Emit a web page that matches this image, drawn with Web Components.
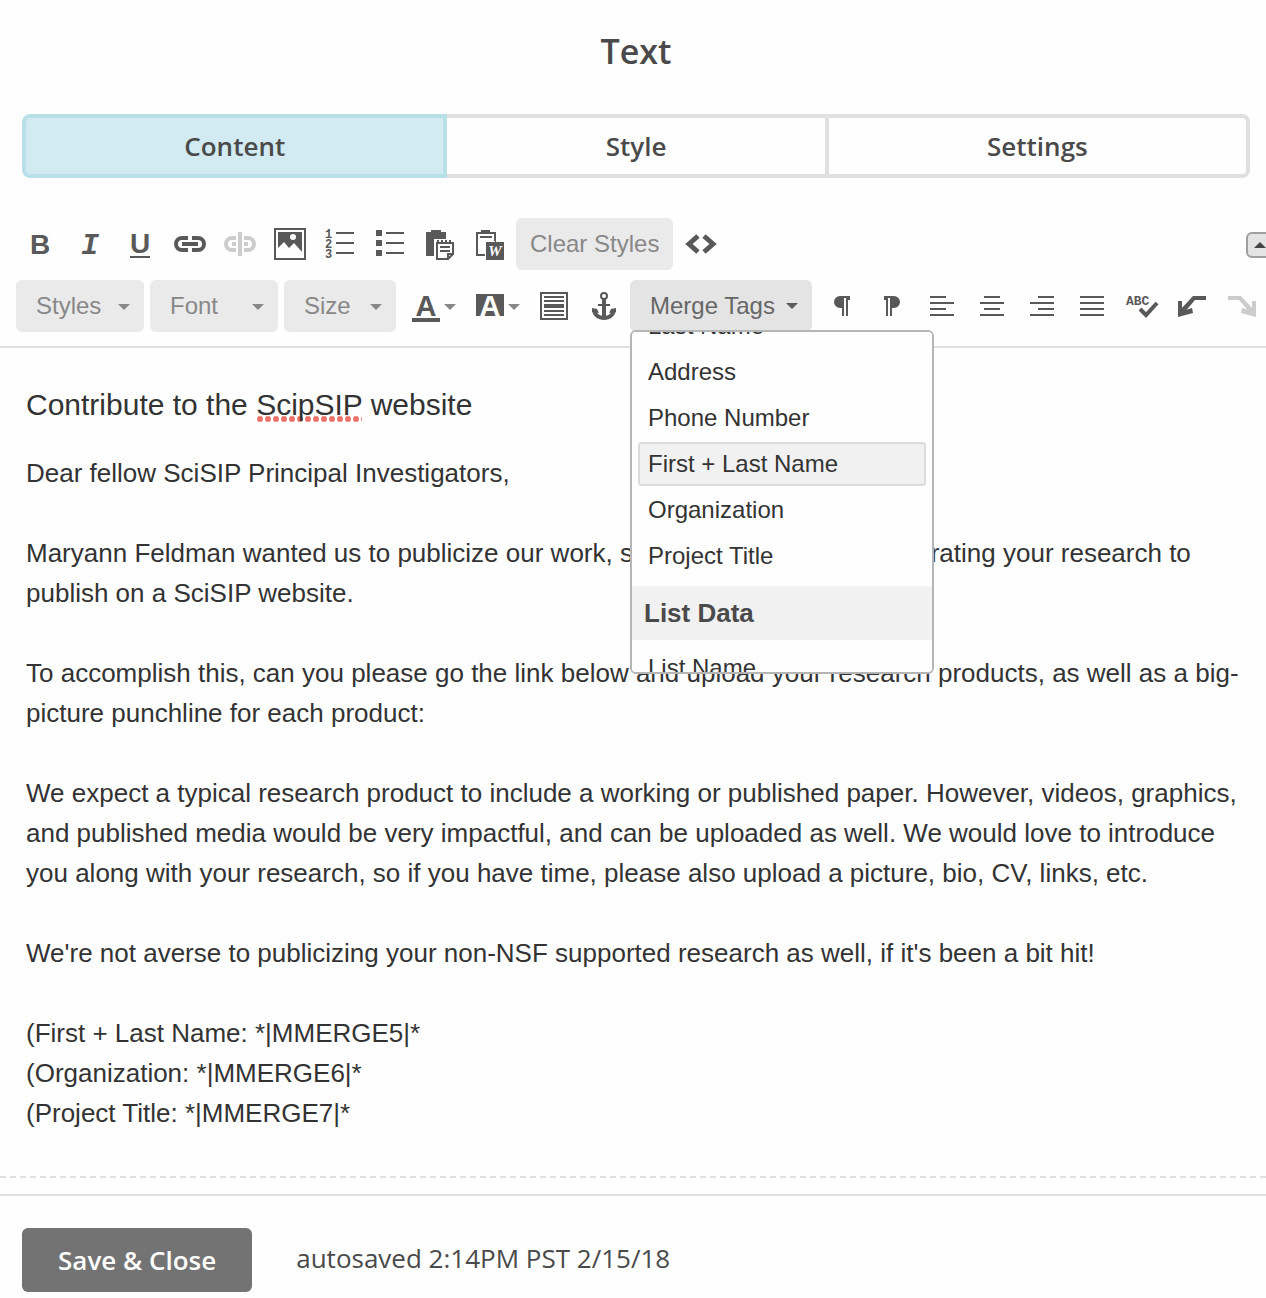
<!DOCTYPE html>
<html lang="en">
<head>
<meta charset="utf-8">
<meta name="viewport" content="width=device-width, initial-scale=1">
<title>Text block editor</title>
<style>
  html { background: #fefefe; }
  body {
    margin: 0;
    overflow-x: hidden;
    --ink: #595959;
    --muted: #888888;
    --line: #e0e0e0;
    --chip: #eaeaea;
    --heading: #4a4a4a;
    --ui: "Liberation Sans", Arial, sans-serif;
    --brand: "Open Sans", "Noto Sans", sans-serif;
    font-family: var(--ui);
    color: #333333;
  }
</style>
</head>
<body>
<content-editor></content-editor>

<script>
const ICONS = {
  bold: '<text x="16" y="26" text-anchor="middle" font-size="28" font-weight="700">B</text>',
  italic: '<text x="16" y="26" text-anchor="middle" font-size="30" font-weight="700" font-style="italic" font-family="Liberation Mono, monospace">I</text>',
  underline: '<text x="16" y="25" text-anchor="middle" font-size="28" font-weight="700">U</text><path d="M6 28h20v2H6z"/>',
  link: '<path class="s4" d="M14 10H8a6 6 0 0 0 0 12h6M18 10h6a6 6 0 0 1 0 12h-6M8 16h16"/>',
  unlink: '<path class="s4" d="M12 10H8a6 6 0 0 0 0 12h4M20 10h4a6 6 0 0 1 0 12h-4M8 16h4M20 16h4M16 4v24"/>',
  image: '<path class="s2" d="M1 1h30v30H1z"/><path d="M4 4h24v20l-8-9-5 5-5-6-6 6z"/><circle cx="19" cy="9" r="3" fill="#fefefe"/>',
  ordered: '<g font-size="12" font-weight="700" font-family="Liberation Mono, monospace"><text x="1" y="10">1</text><text x="1" y="20">2</text><text x="1" y="30">3</text></g><path class="s2" d="M12 5h18M12 15h18M12 25h18"/>',
  bullets: '<path d="M2 2h6v6H2zM2 12h6v6H2zM2 22h6v6H2z"/><path class="s2" d="M12 5h18M12 15h18M12 25h18"/>',
  paste: '<path d="M2 4h5V2h10v2h5v24H2z"/><path fill="#fefefe" d="M10 11h22v21H10z"/><path class="s2" d="M13 15h16v11l-5 5H13zM24 31v-5h5M14 12v3M18 12v3M22 12v3M26 12v3M16 19h10M16 23h10"/>',
  word: '<path class="s2" d="M3 5h18v22H3zM6 9h12"/><path d="M7 2h9v4H7z"/><path fill="#fefefe" d="M11 13h10v15H11z"/><path d="M12 14h18v18H12z"/><text x="21" y="28" text-anchor="middle" fill="#fefefe" font-size="15" font-weight="700" font-style="italic" font-family="Liberation Serif, serif">W</text>',
  code: '<path class="s5" d="M13 8 4 16l9 8M19 8l9 8-9 8"/>',
  block: '<path class="s2" d="M3 3h26v26H3zM6 7h20M6 11h20M6 21h20M6 25h20"/><path d="M6 14h20v4H6z"/>',
  anchor: '<circle class="s2" cx="16" cy="6" r="3"/><path d="M14 9h4v17h-4zM10 14h12v2H10zM4 18l5 1 2 4-7-1zM28 18l-5 1-2 4 7-1z"/><path class="s4" d="M6 19c0 5 4 9 10 9s10-4 10-9"/>',
  ltr: '<path d="M24 6H14a6 6 0 0 0 0 12h2v8h2V8h2v18h2V10h2z"/>',
  rtl: '<path d="M8 6h10a6 6 0 0 1 0 12h-2v8h-2V8h-2v18h-2V10H8z"/>',
  left: '<path class="s2" d="M4 7h16M4 13h24M4 19h16M4 25h24"/>',
  center: '<path class="s2" d="M8 7h16M4 13h24M8 19h16M4 25h24"/>',
  right: '<path class="s2" d="M12 7h16M4 13h24M12 19h16M4 25h24"/>',
  justify: '<path class="s2" d="M4 7h24M4 13h24M4 19h24M4 25h24"/>',
  spell: '<text x="0" y="15" font-size="13" font-weight="700" font-family="Liberation Mono, monospace">ABC</text><path class="s4" d="m14 19 6 6 11-12"/>',
  undo: '<path d="M30 6v4H19L8 23l-4-3L17 6z"/><path d="M2 11h4v10l10-3 1 5-15 4z"/>',
  redo: '<path d="M2 6v4h11l11 13 4-3L15 6z"/><path d="M30 11h-4v10l-10-3-1 5 15 4z"/>',
  color: '<text x="14" y="26" text-anchor="middle" font-size="29" font-weight="700">A</text><path d="M0 28h28v4H0z"/><path class="caret" d="M32 14h12l-6 6z"/>',
  backdrop: '<path d="M0 4h28v22H0z"/><text x="14" y="26" text-anchor="middle" fill="#fefefe" font-size="29" font-weight="700">A</text><path class="caret" d="M32 14h12l-6 6z"/>'
};

class BaseElement extends HTMLElement {
  render(html) {
    if (!this.shadowRoot) this.attachShadow({ mode: 'open' });
    this.shadowRoot.innerHTML = html;
  }
}

/* Icon-only toolbar button; "wide" adds room for a caret. */
customElements.define('tool-icon', class extends BaseElement {
  connectedCallback() {
    const wide = this.hasAttribute('wide');
    const w = wide ? 44 : 32;
    this.render(`
      <style>
        :host { display: block; flex: none; margin-right: 2px; }
        button {
          display: flex; align-items: center; justify-content: center;
          box-sizing: border-box; width: 48px; height: 52px; padding: 0;
          border: 0; background: none; color: var(--ink); font-family: var(--ui);
        }
        :host([wide]) button { width: 62px; padding-left: 2px; }
        button:disabled { color: #cccccc; }
        svg { display: block; fill: currentColor; overflow: visible; }
        .s2, .s4, .s5 { fill: none; stroke: currentColor; stroke-width: 2; }
        .s4 { stroke-width: 4; }
        .s5 { stroke-width: 5; }
        .caret { fill: var(--muted); }
      </style>
      <button type="button" aria-label="${this.getAttribute('label')}" ${this.hasAttribute('disabled') ? 'disabled' : ''}>
        <svg width="${w}" height="32" viewBox="0 0 ${w} 32" aria-hidden="true">${ICONS[this.getAttribute('name')]}</svg>
      </button>`);
  }
});

customElements.define('tool-button', class extends BaseElement {
  connectedCallback() {
    this.render(`
      <style>
        :host { display: block; flex: none; margin-right: 4px; }
        button {
          display: block; height: 52px; padding: 0 14px; border: 0; border-radius: 6px;
          background: var(--chip); color: var(--muted);
          font: 24px/52px var(--ui); white-space: nowrap;
        }
      </style>
      <button type="button"><slot></slot></button>`);
  }
});

customElements.define('tool-select', class extends BaseElement {
  connectedCallback() {
    const label = this.getAttribute('label');
    this.render(`
      <style>
        :host { display: block; flex: none; position: relative; margin-right: 6px; width: 128px; }
        :host([compact]) { width: 112px; }
        select {
          appearance: none; display: block; box-sizing: border-box; width: 100%; height: 52px;
          margin: 0; padding: 0 32px 0 20px; border: 0; border-radius: 6px;
          background: var(--chip); color: var(--muted); font: 24px/52px var(--ui);
        }
        svg { position: absolute; right: 14px; top: 24px; fill: var(--muted); pointer-events: none; }
      </style>
      <select aria-label="${label}"><option>${label}</option></select>
      <svg width="12" height="6" aria-hidden="true"><path d="M0 0h12L6 6z"/></svg>`);
  }
});

/* Scrollable list of merge tags. */
customElements.define('tag-menu', class extends BaseElement {
  connectedCallback() {
    this.render(`
      <style>
        :host {
          display: block; box-sizing: border-box; width: 304px; height: 344px;
          border: 2px solid #b5b5b5; border-radius: 6px; background: #fefefe;
          overflow-y: auto; scrollbar-width: none;
        }
        ul { list-style: none; margin: 0; padding: 6px; display: flex; flex-direction: column; gap: 2px; }
        button {
          display: block; box-sizing: border-box; width: 100%; height: 44px; padding: 0 8px;
          border: 2px solid transparent; border-radius: 4px; background: none;
          color: #333333; font: 24px/40px var(--ui); text-align: left;
        }
        button[aria-current] { background: #f1f1f1; border-color: #dcdcdc; }
        h2 {
          margin: 2px 0 0; height: 54px; padding: 0 12px; background: #f1f1f1;
          color: var(--heading); font: bold 26px/54px var(--ui);
        }
      </style>
      <ul>
        <li><button type="button">Last Name</button></li>
        <li><button type="button">Address</button></li>
        <li><button type="button">Phone Number</button></li>
        <li><button type="button" aria-current="true">First + Last Name</button></li>
        <li><button type="button">Organization</button></li>
        <li><button type="button">Project Title</button></li>
      </ul>
      <h2>List Data</h2>
      <ul><li><button type="button">List Name</button></li></ul>`);
    this.scrollTop = 34;
  }
});

customElements.define('merge-dropdown', class extends BaseElement {
  connectedCallback() {
    this.render(`
      <style>
        :host { display: block; flex: none; position: relative; margin-right: 6px; }
        .trigger {
          display: flex; align-items: center; justify-content: space-between; box-sizing: border-box;
          width: 182px; height: 52px; padding: 0 14px 0 20px; border: 0; border-radius: 6px;
          background: #e4e4e4; color: #666666; font: 24px/52px var(--ui); white-space: nowrap;
        }
        svg { fill: var(--ink); }
        tag-menu { position: absolute; left: 0; top: 50px; z-index: 2; }
      </style>
      <button class="trigger" type="button" aria-haspopup="true" aria-expanded="true">
        <span>Merge Tags</span>
        <svg width="12" height="6" aria-hidden="true"><path d="M0 0h12L6 6z"/></svg>
      </button>
      <tag-menu></tag-menu>`);
  }
});

customElements.define('editor-toolbar', class extends BaseElement {
  connectedCallback() {
    this.render(`
      <style>
        :host {
          display: flex; flex-direction: column; gap: 10px; padding: 0 0 14px 16px;
          border-bottom: 2px solid var(--line);
        }
        .row { display: flex; align-items: center; }
        .collapse {
          flex: none; display: flex; align-items: center; justify-content: center;
          box-sizing: border-box; width: 28px; height: 26px; padding: 0; margin: 2px -8px 0 auto;
          border: 2px solid #a0a0a0; border-radius: 6px; background: #e4e4e4;
        }
      </style>
      <div class="row">
        <tool-icon name="bold" label="Bold"></tool-icon>
        <tool-icon name="italic" label="Italic"></tool-icon>
        <tool-icon name="underline" label="Underline"></tool-icon>
        <tool-icon name="link" label="Link"></tool-icon>
        <tool-icon name="unlink" label="Unlink" disabled></tool-icon>
        <tool-icon name="image" label="Image"></tool-icon>
        <tool-icon name="ordered" label="Numbered list"></tool-icon>
        <tool-icon name="bullets" label="Bulleted list"></tool-icon>
        <tool-icon name="paste" label="Paste as plain text"></tool-icon>
        <tool-icon name="word" label="Paste from Word"></tool-icon>
        <tool-button>Clear Styles</tool-button>
        <tool-icon name="code" label="Source"></tool-icon>
        <button class="collapse" type="button" aria-label="Collapse toolbar">
          <svg width="12" height="6" fill="#444444" aria-hidden="true"><path d="M0 6h12L6 0z"/></svg>
        </button>
      </div>
      <div class="row">
        <tool-select label="Styles"></tool-select>
        <tool-select label="Font"></tool-select>
        <tool-select label="Size" compact></tool-select>
        <tool-icon name="color" label="Text color" wide></tool-icon>
        <tool-icon name="backdrop" label="Background color" wide></tool-icon>
        <tool-icon name="block" label="Templates"></tool-icon>
        <tool-icon name="anchor" label="Anchor"></tool-icon>
        <merge-dropdown></merge-dropdown>
        <tool-icon name="ltr" label="Left to right"></tool-icon>
        <tool-icon name="rtl" label="Right to left"></tool-icon>
        <tool-icon name="left" label="Align left"></tool-icon>
        <tool-icon name="center" label="Align center"></tool-icon>
        <tool-icon name="right" label="Align right"></tool-icon>
        <tool-icon name="justify" label="Justify"></tool-icon>
        <tool-icon name="spell" label="Check spelling"></tool-icon>
        <tool-icon name="undo" label="Undo"></tool-icon>
        <tool-icon name="redo" label="Redo" disabled></tool-icon>
      </div>`);
  }
});

customElements.define('editor-tabs', class extends BaseElement {
  connectedCallback() {
    this.render(`
      <style>
        :host { display: flex; }
        button {
          flex: 1 1 auto; box-sizing: border-box; height: 64px; padding: 0;
          border: 4px solid var(--line); border-left-width: 0; background: #fefefe;
          color: var(--heading); font: 600 26px/56px var(--brand);
        }
        button:first-of-type { border-left-width: 4px; border-radius: 8px 0 0 8px; }
        button:last-of-type { border-radius: 0 8px 8px 0; }
        button[aria-selected="true"] { background: #d2eaf1; border-color: #b9dfe9; }
      </style>
      <button type="button" role="tab" aria-selected="true">Content</button>
      <button type="button" role="tab" aria-selected="false">Style</button>
      <button type="button" role="tab" aria-selected="false">Settings</button>`);
    this.setAttribute('role', 'tablist');
  }
});

customElements.define('rich-text', class extends BaseElement {
  connectedCallback() {
    this.render(`
      <style>
        :host {
          display: block; padding: 37px 22px 43px 26px; border-bottom: 2px dashed var(--line);
          font: 26px/40px var(--ui); color: #333333;
        }
        h1, p { margin: 0; }
        h1 { margin-bottom: 28px; font: 30px/40px var(--ui); }
        p + p { margin-top: 40px; }
        .typo {
          padding-bottom: 1px;
          background: radial-gradient(circle at 3px 3px, #ec7063 2px, #f3a39b 3px, transparent 3px) 1px 100% / 8px 6px repeat-x;
        }
      </style>
      <article>
        <h1>Contribute to the <span class="typo">ScipSIP</span> website</h1>
        <p>Dear fellow SciSIP Principal Investigators,</p>
        <p>Maryann Feldman wanted us to publicize our work, so we would like help generating your research to publish on a SciSIP website.</p>
        <p>To accomplish this, can you please go the link below and upload your research products, as well as a big-picture punchline for each product:</p>
        <p>We expect a typical research product to include a working or published paper. However, videos, graphics, and published media would be very impactful, and can be uploaded as well. We would love to introduce you along with your research, so if you have time, please also upload a picture, bio, CV, links, etc.</p>
        <p>We're not averse to publicizing your non-NSF supported research as well, if it's been a bit hit!</p>
        <p>(First + Last Name: *|MMERGE5|*<br>(Organization: *|MMERGE6|*<br>(Project Title: *|MMERGE7|*</p>
      </article>`);
  }
});

customElements.define('save-bar', class extends BaseElement {
  connectedCallback() {
    this.render(`
      <style>
        :host {
          display: flex; align-items: flex-start; gap: 44px; margin-top: 16px; padding: 32px 22px 6px;
          border-top: 2px solid var(--line); font: 26px/60px var(--brand); color: var(--heading);
        }
        button {
          height: 64px; padding: 0 36px; border: 0; border-radius: 6px;
          background: #737373; color: #ffffff; font: 600 26px/64px var(--brand);
        }
      </style>
      <button type="button">Save &amp; Close</button>
      <span><slot></slot></span>`);
  }
});

customElements.define('content-editor', class extends BaseElement {
  connectedCallback() {
    this.render(`
      <style>
        :host { display: block; }
        header { padding: 27px 16px 40px 22px; }
        h1 {
          margin: 0 0 39px; text-align: center; color: var(--heading);
          font: 600 34px/48px var(--brand);
        }
      </style>
      <header>
        <h1>Text</h1>
        <editor-tabs></editor-tabs>
      </header>
      <editor-toolbar></editor-toolbar>
      <rich-text></rich-text>
      <save-bar>autosaved 2:14PM PST 2/15/18</save-bar>`);
  }
});
</script>
</body>
</html>
